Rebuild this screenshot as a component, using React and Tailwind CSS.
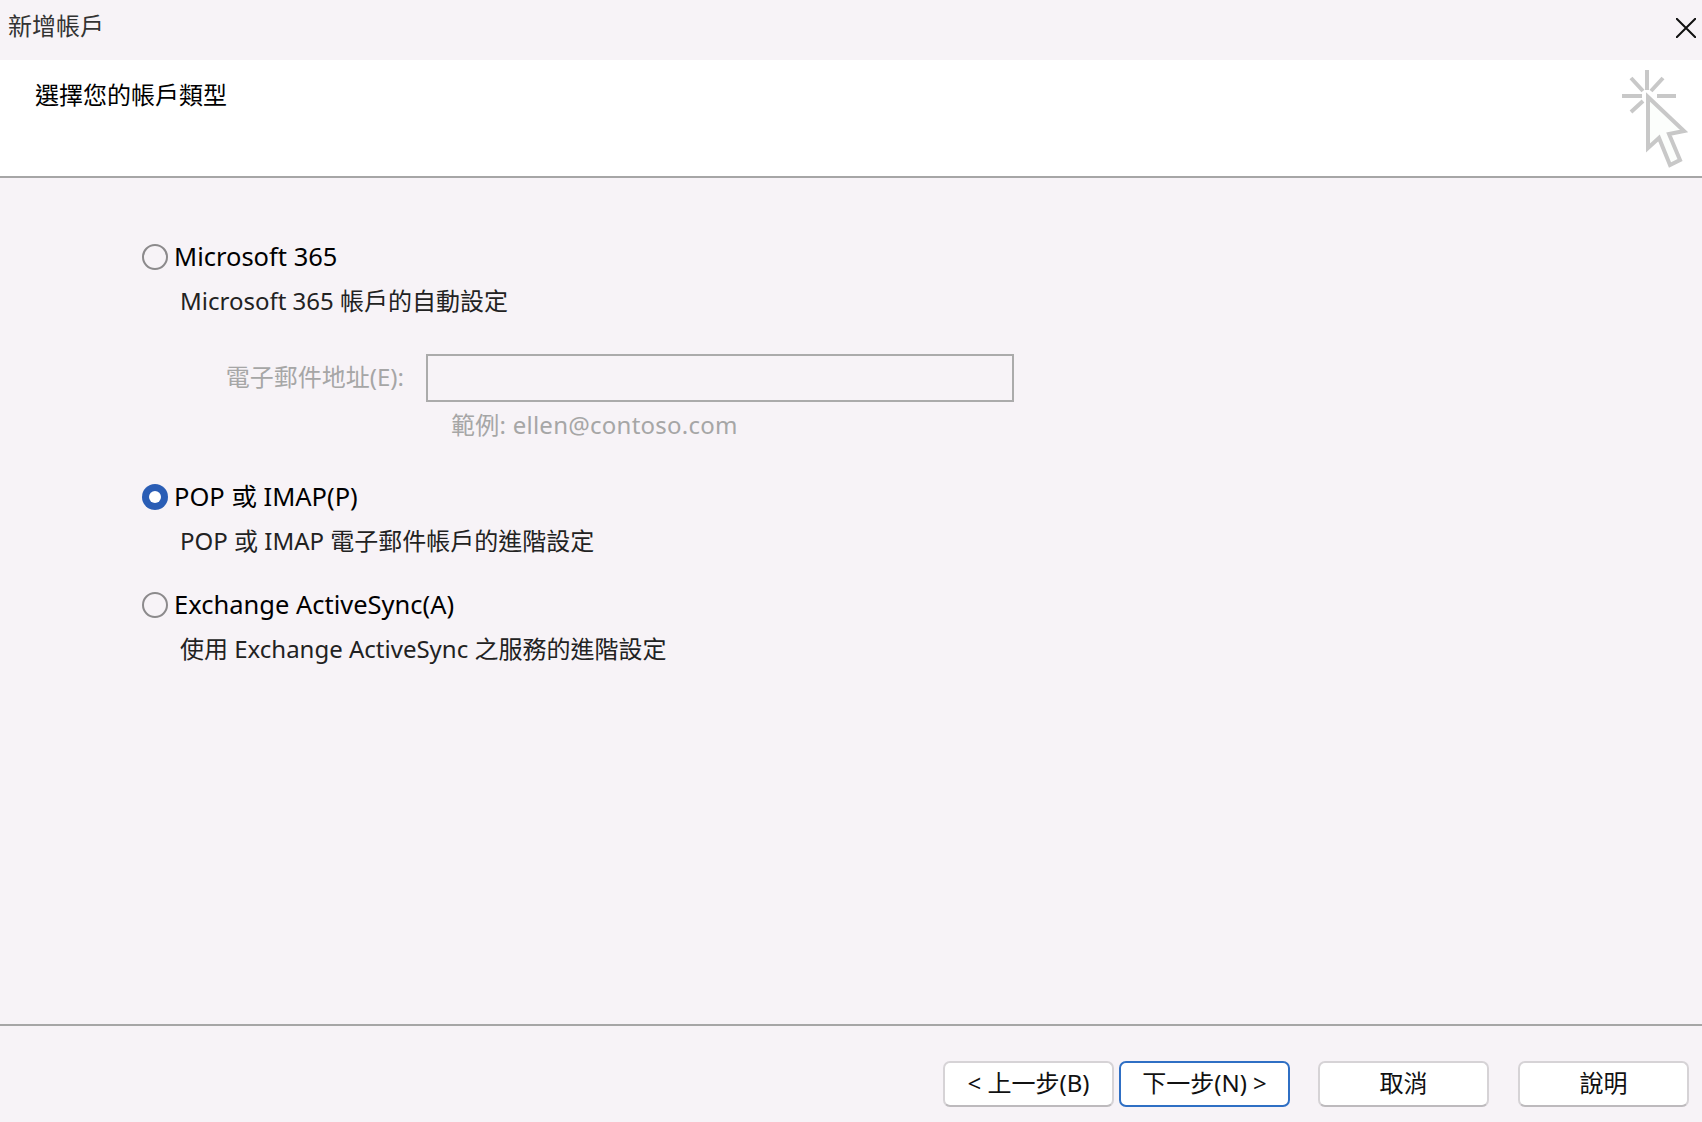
import React from 'react';

const FONT = "font-['Noto_Sans','Noto_Sans_CJK_TC',sans-serif]";

// radio circle, the selected one is filled blue with a white dot
const Radio = ({ checked }) =>
    checked ? (
        <div className="w-[26px] h-[26px] rounded-full bg-[#2a5db5] flex items-center justify-center shrink-0">
            <div className="w-[12px] h-[12px] rounded-full bg-white"></div>
        </div>
    ) : (
        <div className="w-[26px] h-[26px] rounded-full border-2 border-[#8c8a8c] bg-[#f7f3f7] shrink-0"></div>
    );

const Option = ({ checked, label, description, className }) => (
    <div className={className}>
        <div className="flex items-center gap-[6px] h-9 text-black">
            <Radio checked={checked} />
            <span className="text-[25.5px] pb-[2px]">{label}</span>
        </div>
        <div className="h-9 leading-9 pl-[38px] mt-2 text-[#222222]">{description}</div>
    </div>
);

const Button = ({ children, primary, className }) => (
    <button
        className={`w-[171px] h-[46px] pb-[2px] rounded-[7px] bg-white border-2 text-[#111111] ${
            primary ? 'border-[#2f6fc4]' : 'border-[#d6d3d6] border-b-[#bdbabd]'
        } ${className || ''}`}
    >
        {children}
    </button>
);

const CursorIcon = () => (
    <svg width="70" height="102" viewBox="0 0 70 102" fill="none" stroke="#c8c8c8" strokeWidth="4">
        <path d="M27 2V22M2 28H22M37 28H56" />
        <path d="M11 10L23 23M43 10L31 23M11 44L23 33" />
        <path d="M28 29V80L39 70L50 97L60 92L49 66L64 63Z" fill="#fcfefc" />
    </svg>
);

export default function App() {
    return (
        <div className={`${FONT} w-full h-screen flex flex-col bg-[#f7f3f7] text-[24px] overflow-hidden`}>
            {/* title bar */}
            <div className="h-[60px] flex items-center justify-between pl-2 pr-[6px] pb-[8px] text-[#333333] shrink-0">
                <span>新增帳戶</span>
                <svg width="20" height="20" viewBox="0 0 20 20" stroke="#111111" strokeWidth="2" className="mt-[4px]">
                    <path d="M0 0L20 20M20 0L0 20" />
                </svg>
            </div>

            {/* header */}
            <div className="h-[118px] bg-white border-b-2 border-[#a6a6a6] flex justify-between pl-[35px] pr-[12px] text-black shrink-0">
                <span className="mt-[17px] h-9 leading-9">選擇您的帳戶類型</span>
                <div className="mt-[8px]">
                    <CursorIcon />
                </div>
            </div>

            {/* options */}
            <div className="flex-1 pl-[142px] pt-[61px]">
                <Option label="Microsoft 365" description="Microsoft 365 帳戶的自動設定" />

                <div className="flex items-center mt-[35px] text-[#a6a6a6]">
                    <div className="w-[262px] text-right pb-[2px]">電子郵件地址(E):</div>
                    <div className="w-[588px] h-[48px] ml-[22px] border-2 border-[#ababab] bg-[#f7f3f7]"></div>
                </div>
                <div className="h-9 leading-9 pl-[309px] mt-[5px] text-[#a6a6a6] tracking-[0.25px]">範例: ellen@contoso.com</div>

                <Option checked label="POP 或 IMAP(P)" description="POP 或 IMAP 電子郵件帳戶的進階設定" className="mt-9" />
                <Option label="Exchange ActiveSync(A)" description="使用 Exchange ActiveSync 之服務的進階設定" className="mt-[28px]" />
            </div>

            {/* footer */}
            <div className="h-[98px] border-t-2 border-[#a6a6a6] flex justify-end pr-[13px] pt-[35px] shrink-0">
                <Button>&lt; 上一步(B)</Button>
                <Button primary className="ml-[5px]">下一步(N) &gt;</Button>
                <Button className="ml-[28px]">取消</Button>
                <Button className="ml-[29px]">說明</Button>
            </div>
        </div>
    );
}
